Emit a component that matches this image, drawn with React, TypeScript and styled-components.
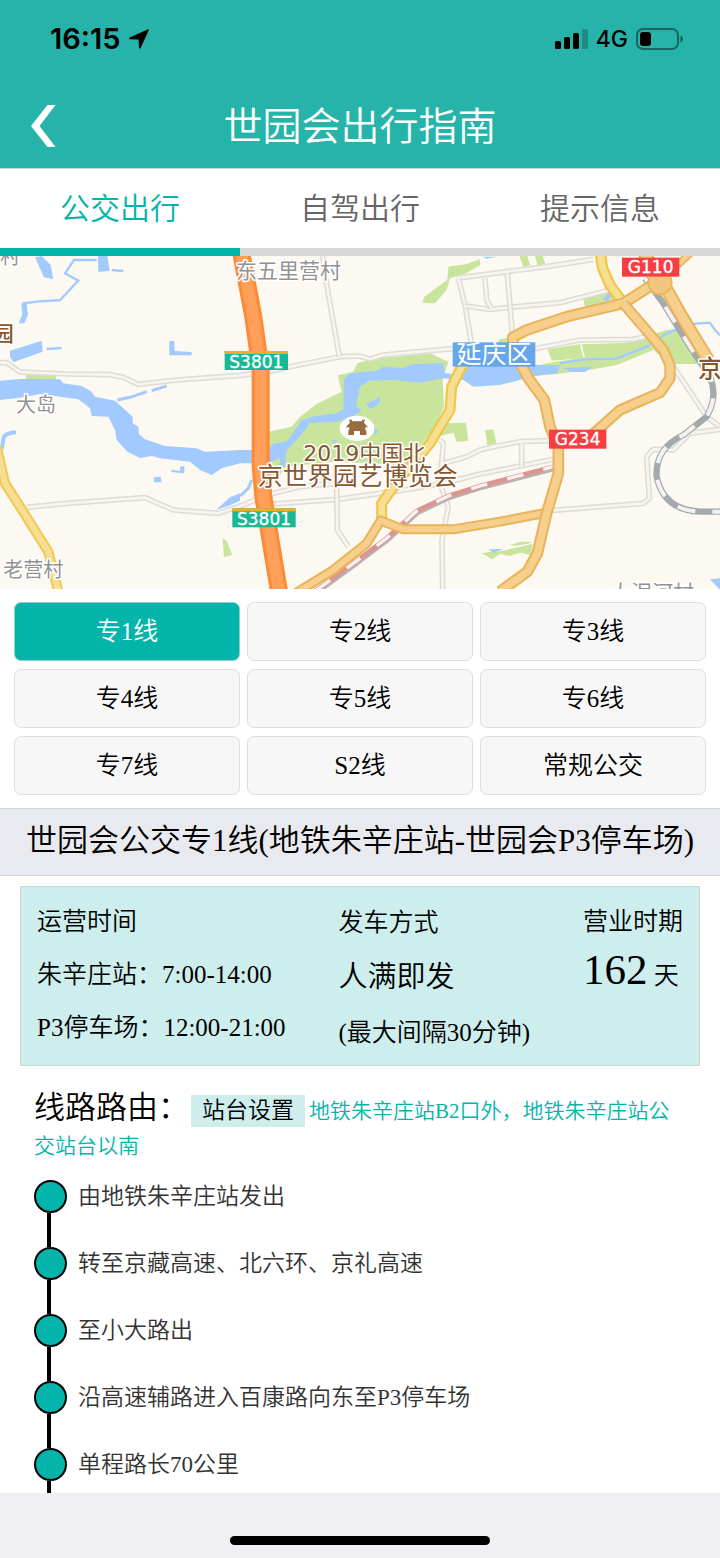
import React, { useState } from 'react';
import styled, { createGlobalStyle } from 'styled-components';

const TEAL = '#03b4aa';
const SANS = '"Noto Sans CJK SC", sans-serif';
const SERIF = '"Liberation Serif", "Noto Sans CJK SC", serif';

const GlobalStyle = createGlobalStyle`
  *, *::before, *::after { box-sizing: border-box; }
  body { margin: 0; background: #efeff4; }
  button { font: inherit; border: 0; padding: 0; cursor: pointer; }
  h1, h2, h3, p, ul, ol, dl, dd, dt { margin: 0; padding: 0; font-size: inherit; font-weight: inherit; }
`;

const Page = styled.div`
  display: flex;
  flex-direction: column;
  min-height: 100vh;
  background: #fff;
  color: #000;
  font-family: ${SERIF};
  font-weight: 350;
`;

const Header = styled.header`
  background: #26b4aa;
  border-bottom: 1px solid #bfdcda;
`;

const StatusBar = styled.div`
  display: flex;
  align-items: center;
  justify-content: space-between;
  height: 84px;
  padding: 0 36px 6px 50px;
  font-family: Inter, sans-serif;
`;

const StatusGroup = styled.div`
  display: flex;
  align-items: center;
  gap: 8px;
`;

const Clock = styled.span`
  font-size: 29px;
  line-height: 34px;
  font-weight: 600;
`;

const Network = styled.span`
  font-size: 23px;
  line-height: 34px;
  font-weight: 500;
`;

const TitleBar = styled.div`
  display: grid;
  grid-template-columns: 90px 1fr 90px;
  align-items: center;
  height: 84px;
`;

const BackButton = styled.button`
  display: flex;
  align-items: center;
  height: 84px;
  padding-left: 31px;
  background: transparent;
`;

const Title = styled.h1`
  padding-bottom: 6px;
  color: #fff;
  font-family: ${SANS};
  font-size: 39px;
  line-height: 58px;
  text-align: center;
`;

const Tabs = styled.nav`
  display: grid;
  grid-template-columns: repeat(3, 1fr);
`;

const Tab = styled.button<{ $active: boolean }>`
  height: 87px;
  padding-bottom: 6px;
  background: #fff;
  border-bottom: 8px solid ${(p) => (p.$active ? TEAL : '#d8d8d8')};
  color: ${(p) => (p.$active ? TEAL : '#666')};
  font-family: ${SANS};
  font-size: 30px;
  line-height: 44px;
`;

const MapView = styled.svg`
  display: block;
  width: 100%;
  height: auto;
`;

const LineGrid = styled.div`
  display: grid;
  grid-template-columns: repeat(3, 1fr);
  gap: 8px 7px;
  padding: 13px 14px;
`;

const LineButton = styled.button<{ $active: boolean }>`
  height: 59px;
  border: 1px solid ${(p) => (p.$active ? '#8fcfca' : '#dedede')};
  border-radius: 7px;
  background: ${(p) => (p.$active ? TEAL : '#f7f7f7')};
  color: ${(p) => (p.$active ? '#fff' : '#000')};
  font-size: 25px;
  line-height: 36px;
`;

const RouteHeading = styled.h2`
  padding: 10px 0 12px;
  background: #e9eaef;
  border: solid #d4d5d9;
  border-width: 1px 0;
  font-size: 31px;
  line-height: 44px;
  text-align: center;
  white-space: nowrap;
`;

const InfoCard = styled.section`
  display: flex;
  justify-content: space-between;
  margin: 10px 20px 0;
  padding: 8px 16px 5px;
  border: 1px solid #bfd9d8;
  background: #cdeeed;
  font-size: 25px;
  white-space: nowrap;
`;

const InfoColumn = styled.div<{ $spread?: boolean }>`
  line-height: ${(p) => (p.$spread ? '55px' : '53px')};
`;

const Emphasis = styled.p`
  font-size: 29px;
`;

const Days = styled.span`
  font-size: 43px;
  line-height: 43px;
`;

const RouteIntro = styled.section`
  padding: 24px 34px 0;
  color: ${TEAL};
  font-size: 21px;
  line-height: 35px;
`;

const IntroLabel = styled.span`
  color: #000;
  font-size: 31px;
`;

const StationTag = styled.span`
  display: inline-block;
  margin: 0 4px 0 2px;
  padding: 0 11px;
  background: #cdeeed;
  color: #000;
  font-size: 23px;
  line-height: 32px;
`;

const StopList = styled.ol`
  flex: 1;
  padding: 16px 34px 0;
  list-style: none;
`;

const Stop = styled.li`
  display: flex;
  gap: 11px;
  color: #333;
  font-size: 23px;
  line-height: 34px;
`;

const Rail = styled.span`
  display: flex;
  flex-direction: column;
  width: 33px;
`;

const Dot = styled.span`
  height: 33px;
  border: 2px solid #000;
  border-radius: 50%;
  background: ${TEAL};
`;

const Connector = styled.span<{ $cut: boolean }>`
  width: 4px;
  height: ${(p) => (p.$cut ? '12px' : '34px')};
  margin-left: 13px;
  background: #000;
`;

const HomeArea = styled.footer`
  display: flex;
  justify-content: center;
  align-items: flex-end;
  height: 66px;
  padding-bottom: 14px;
  background: #efeff4;
`;

const HomeIndicator = styled.div`
  width: 36%;
  height: 9px;
  border-radius: 5px;
  background: #000;
`;

function Shield({ x, y, w, color, text, strip }: { x: number; y: number; w: number; color: string; text: string; strip?: boolean }) {
  return (
    <g>
      <rect x={x} y={y} width={w} height={57} fill={color} />
      {strip && <rect x={x} y={y} width={w} height={9} fill="#f3ae1b" />}
      <text x={x + w / 2} y={y + (strip ? 51 : 47)} textAnchor="middle" fontFamily="DejaVu Sans" fontSize={51} fontWeight="400" fill="#fff" stroke="#fff">
        {text}
      </text>
    </g>
  );
}

function Road({ d, edge, fill, width, inner }: { d: string; edge: string; fill: string; width: number; inner: number }) {
  return (
    <g fill="none" strokeLinejoin="round">
      <path d={d} stroke={edge} strokeWidth={width} />
      <path d={d} stroke={fill} strokeWidth={inner} />
    </g>
  );
}

const minorRoads = [
  'M0 338H20L60 366L200 372L330 374L370 382L415 403L530 390L720 376L800 366L900 344L1020 320L1075 318L1110 327L1150 315L1260 305L1360 296',
  'M80 772L200 760L435 743L520 780L655 790L730 765L800 735L900 710L1010 700',
  'M968 18L976 80L1018 320',
  'M820 762L1010 748L1200 722L1330 700L1440 672L1660 628',
  'M1010 710L1012 840L1045 890',
  'M1320 570L1330 580L1320 700L1345 770L1326 870L1328 1020',
  'M1330 640L1400 620L1440 600L1480 590L1560 575L1650 572',
  'M1370 85L1520 65L1640 50L1780 28',
  'M1375 85L1395 165L1415 285',
  'M1395 168L1470 178L1550 170L1680 158L1820 122',
  'M1455 85L1460 150L1475 175',
  'M1522 70L1537 250',
  'M1605 296L1740 270L1900 268L1945 258',
  'M2020 350L2120 500L2160 530',
  'M1650 782L1930 760L1948 745L1940 620L1960 598L2020 600L2070 550L2160 538',
  'M1565 580V650',
];

function CityMap() {
  return (
    <MapView viewBox="0 18 2160 999" role="img" aria-label="世园会周边地图">
      <rect width="2160" height="1040" fill="#fcf9f2" />

      <g fill="#c9e59d">
        <path d="M78 375H168V392H78Z" />
        <path d="M668 865L680 872L697 915L672 922Z" />
        <path d="M805 545L875 530L900 500L950 462L1025 425L1013 376L1060 365L1072 340L1130 325L1190 320L1290 310L1345 335L1328 390L1332 470L1300 540L1250 600L1220 645L1000 635L860 650L805 715Z" />
        <path d="M1310 560L1340 520L1398 518L1405 572L1370 576L1360 548Z" />
        <path d="M1345 50L1400 42L1440 28V45L1400 70L1350 85L1340 120L1305 160L1267 158L1272 142L1300 120L1342 90Z" />
        <path d="M1558 18H1582L1590 45L1570 52ZM1605 18H1628L1636 42L1612 46Z" />
        <path d="M1750 148L1830 125L1860 145L1755 172Z" />
        <path d="M1643 298L1740 283L1750 325L1655 332Z" />
        <path d="M1745 283L1880 278L2000 240L2050 238L2110 342H2010L1960 300L1850 345L1780 358L1670 372L1530 385V372L1640 340L1755 322Z" />
        <path d="M1498 268L1530 262V280H1495Z" />
        <path d="M1455 540L1480 538L1490 582L1462 588Z" />
        <path d="M1444 910L1475 905L1510 902L1560 890L1598 882L1592 915L1560 908L1530 918L1500 912L1476 928L1455 915Z" />
        <path d="M1530 885L1560 875H1595L1590 880L1545 888Z" />
      </g>

      <g fill="#a3caff">
        <path d="M0 392L60 387L180 388L190 400L245 408L275 425L285 440L345 452L398 500V520L415 530L417 552L435 568L495 588L590 595L615 605L720 600L806 600L820 580L860 575L905 510L945 498L1010 490L1030 478L1032 385L1050 370L1130 362L1150 350L1210 354L1240 342L1330 340L1335 370L1375 373L1400 350L1500 345H1680L1672 370L1600 378L1540 395L1500 405L1420 410L1390 390L1330 385L1260 398L1180 390L1110 392L1080 410L1068 470L1085 480L1060 500L1010 515L930 520L900 560L860 600L855 650H838L840 625L800 640H720L665 655L635 675L600 660L570 635L480 625L455 618L420 624L382 605L350 570L345 540L325 500L275 498L270 475L235 448L190 442L120 432L70 442L0 450Z" />
        <path d="M105 22L125 18L152 45L160 88L132 82Z" />
        <path d="M294 18H322L329 62L295 66Z" />
        <path d="M30 302L125 272L128 305L40 337L30 320Z" />
        <path d="M508 273H522L524 303L575 306V316H508Z" />
        <path d="M461 682L482 680L485 697H462ZM514 660L540 662L540 650L553 648V670L514 666Z" />
        <path d="M648 780L690 742L720 730V752L690 766Z" />
        <path d="M1098 462L1140 440V458L1112 478ZM1120 532L1134 545L1125 555ZM995 570L1015 572L998 580Z" />
        <path d="M1690 354L1780 350L1755 366H1715Z" />
        <path d="M1808 148L1828 126L1834 138L1822 155Z" />
        <path d="M2130 988L2160 985V1020Z" />
        <path d="M1448 20H1490L1460 26ZM1465 898L1510 897L1480 908Z" />
      </g>
      <g fill="none" stroke="#a3caff" strokeWidth="9">
        <path d="M290 30L222 30L195 70L235 92L180 150L110 155L72 160L80 190L60 220" strokeWidth="7" />
        <path d="M72 160L75 195L65 218" strokeWidth="16" />
        <path d="M140 297L185 294M335 60L370 63" strokeWidth="7" />
        <path d="M352 450L390 442L440 425M455 422L500 408" />
        <path d="M48 547Q8 550 10 570L5 598" strokeWidth="12" />
        <path d="M720 738L745 715L755 690" />
        <path d="M1680 340L1750 328L1850 326L1940 290L2000 250L2070 222L2130 218L2145 240L2160 256" strokeWidth="7" />
      </g>

      {minorRoads.map((d) => (
        <Road key={d} d={d} edge="#dfdbd5" fill="#f7f5f0" width={17} inner={8} />
      ))}

      <g fill="none">
        <path d="M930 1040L1060 945L1160 870L1250 788L1345 742L1440 712L1660 655" stroke="#b8b3b1" strokeWidth="18" />
        <path d="M930 1034L1060 940L1160 865L1250 783L1345 738L1440 708L1660 650" stroke="#dc9692" strokeWidth="14" />
        <path d="M950 1020L1060 940L1160 865L1250 783L1345 738L1440 708L1660 650" stroke="#fbf2ef" strokeWidth="10" strokeDasharray="50 62" />
        <path d="M1935 85L1990 160L2070 290L2130 380Q2155 440 2120 500L2050 555Q1965 595 1970 680Q1990 780 2100 785H2160" stroke="#a3a9ad" strokeWidth="19" />
        <path d="M1935 85L1990 160L2070 290L2130 380Q2155 440 2120 500L2050 555Q1965 595 1970 680Q1990 780 2100 785H2160" stroke="#f3f2ef" strokeWidth="12" strokeDasharray="55 50" />
      </g>

      <Road d="M-10 590L15 700L60 770L145 905L175 1025" edge="#f0cb56" fill="#f6de94" width={31} inner={18} />
      <Road d="M1145 812V760L1200 685L1240 640L1290 580L1350 480L1355 410L1385 350L1430 315" edge="#efc746" fill="#f6de92" width={33} inner={20} />
      <Road d="M1800 5L1808 55L1830 105L1870 160" edge="#efc746" fill="#f6de92" width={34} inner={21} />
      <Road d="M870 1040L1000 960L1100 880L1142 812L1210 838H1360L1500 815L1640 788" edge="#e9b35a" fill="#f5cf8b" width={30} inner={18} />
      <Road d="M1500 1025L1582 965L1612 910L1640 790L1675 670V590L1650 530L1633 450L1585 385L1540 300L1538 262L1580 240L1700 200L1870 160L1980 90" edge="#e9b35a" fill="#f5cf8b" width={35} inner={23} />
      <Road d="M1870 160L1990 300L2010 345V385L1980 428L1860 480L1770 560" edge="#e9b35a" fill="#f5cf8b" width={34} inner={22} />
      <Road d="M1930 5L1990 100L2040 190L2125 330" edge="#e9b35a" fill="#f5cf8b" width={40} inner={28} />
      <Road d="M1980 95L2070 10" edge="#e9b35a" fill="#f5cf8b" width={24} inner={14} />
      <circle cx="1980" cy="98" r="35" fill="#f0c67e" stroke="#e9b35a" strokeWidth="5" />
      <Road d="M722 0L760 200L782 360V650L790 740L838 1030" edge="#fb8b35" fill="#ff9f5a" width={54} inner={36} />

      <Shield x={674} y={303} w={190} color="#19b894" text="S3801" strip />
      <Shield x={697} y={775} w={190} color="#19b894" text="S3801" strip />
      <Shield x={1866} y={23} w={172} color="#f93e43" text="G110" />
      <Shield x={1647} y={539} w={172} color="#f93e43" text="G234" />

      <rect x="1358" y="277" width="248" height="73" fill="#5a9fec" fillOpacity="0.92" />
      <g fontFamily="Noto Sans CJK SC" fontSize="60" fontWeight="400" stroke="#fff" strokeWidth="9" strokeLinejoin="round" paintOrder="stroke">
        <text x="1482" y="340" fontSize="75" textAnchor="middle" fill="#fff" stroke="none">延庆区</text>
        <g fill="#929292">
          <text x="708" y="84" fontSize="63">东五里营村</text>
          <text x="0" y="42">村</text>
          <text x="48" y="486">大岛</text>
          <text x="10" y="980">老营村</text>
          <text x="1830" y="1050" fontSize="63">大泥河村</text>
        </g>
        <g fill="#86562f">
          <text x="-22" y="272" fontSize="63" fontWeight="500">园</text>
          <text x="2094" y="382" fontSize="72" fontWeight="500">京</text>
          <text x="1093" y="632" fontFamily="DejaVu Sans, Noto Sans CJK SC" fontSize="66" textAnchor="middle">2019中国北</text>
          <text x="1073" y="704" fontSize="75" textAnchor="middle">京世界园艺博览会</text>
        </g>
      </g>

      <ellipse cx="1071" cy="535" rx="52" ry="38" fill="#fff" />
      <path d="M1047 509H1056V514H1086V509H1095L1092 518L1104 532H1096V541H1099V555H1080V543H1062V555H1045V541H1048V532H1037L1050 518Z" fill="#9b6a3f" />
    </MapView>
  );
}

const tabs = ['公交出行', '自驾出行', '提示信息'];
const lines = ['专1线', '专2线', '专3线', '专4线', '专5线', '专6线', '专7线', 'S2线', '常规公交'];
const stops = [
  '由地铁朱辛庄站发出',
  '转至京藏高速、北六环、京礼高速',
  '至小大路出',
  '沿高速辅路进入百康路向东至P3停车场',
  '单程路长70公里',
];

export default function App() {
  const [tab, setTab] = useState(0);
  const [line, setLine] = useState(0);

  return (
    <Page lang="zh-CN">
      <GlobalStyle />
      <Header>
        <StatusBar>
          <StatusGroup>
            <Clock>16:15</Clock>
            <svg width="20" height="20" viewBox="0 0 20 20" aria-hidden="true">
              <path d="M18.6 0.4Q20.2 -0.2 19.6 1.600L11.600 19Q10.400 20.600 10 18.800L9.600 10.600L1.200 10.300Q-0.800 9.800 0.800 8.600Z" />
            </svg>
          </StatusGroup>
          <StatusGroup>
            <svg width="33" height="22" viewBox="0 0 33 22" aria-hidden="true">
              <rect x="0" y="13" width="6" height="8" rx="1.5" />
              <rect x="9" y="9" width="6" height="12" rx="1.5" />
              <rect x="18" y="5" width="6" height="16" rx="1.5" />
              <rect x="27" y="1" width="6" height="20" rx="1.5" opacity="0.22" />
            </svg>
            <Network>4G</Network>
            <svg width="48" height="24" viewBox="0 0 48 24" aria-hidden="true">
              <rect x="1" y="2" width="41" height="20" rx="6" fill="none" stroke="#000" strokeOpacity="0.42" strokeWidth="2" />
              <rect x="4" y="5" width="11" height="14" rx="3" />
              <path d="M44.5 8.5Q47 9.500 47 12T44.500 15.500Z" opacity="0.5" />
            </svg>
          </StatusGroup>
        </StatusBar>
        <TitleBar>
          <BackButton type="button" aria-label="返回">
            <svg width="25" height="42" viewBox="0 0 25 42" aria-hidden="true">
              <path d="M16.500 0H24.500L8.500 21L24.500 42H16.500L0 21Z" fill="#fff" />
            </svg>
          </BackButton>
          <Title>世园会出行指南</Title>
        </TitleBar>
      </Header>

      <Tabs>
        {tabs.map((name, i) => (
          <Tab key={name} type="button" $active={i === tab} onClick={() => setTab(i)}>
            {name}
          </Tab>
        ))}
      </Tabs>

      <CityMap />

      <LineGrid>
        {lines.map((name, i) => (
          <LineButton key={name} type="button" $active={i === line} onClick={() => setLine(i)}>
            {name}
          </LineButton>
        ))}
      </LineGrid>

      <RouteHeading>世园会公交专1线(地铁朱辛庄站-世园会P3停车场)</RouteHeading>

      <InfoCard>
        <InfoColumn>
          <h3>运营时间</h3>
          <p>朱辛庄站：7:00-14:00</p>
          <p>P3停车场：12:00-21:00</p>
        </InfoColumn>
        <InfoColumn $spread>
          <h3>发车方式</h3>
          <Emphasis>人满即发</Emphasis>
          <p>(最大间隔30分钟)</p>
        </InfoColumn>
        <InfoColumn>
          <h3>营业时期</h3>
          <p>
            <Days>162</Days> 天
          </p>
        </InfoColumn>
      </InfoCard>

      <RouteIntro>
        <IntroLabel>线路路由：</IntroLabel>
        <StationTag>站台设置</StationTag>
        地铁朱辛庄站B2口外，地铁朱辛庄站公交站台以南
      </RouteIntro>

      <StopList>
        {stops.map((stop, i) => (
          <Stop key={stop}>
            <Rail>
              <Dot />
              <Connector $cut={i === stops.length - 1} />
            </Rail>
            {stop}
          </Stop>
        ))}
      </StopList>

      <HomeArea>
        <HomeIndicator />
      </HomeArea>
    </Page>
  );
}
